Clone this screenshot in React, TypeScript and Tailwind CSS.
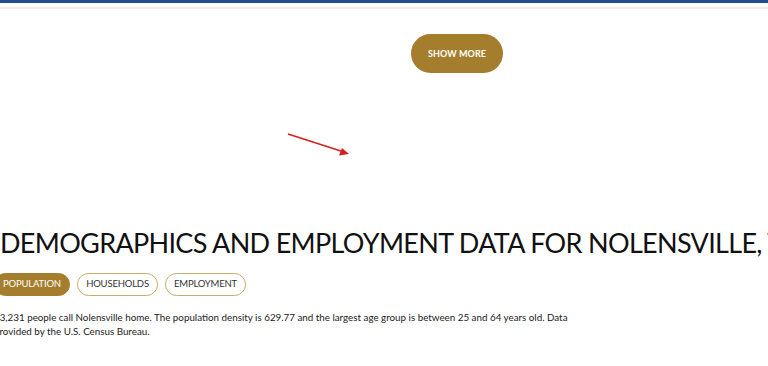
const tabs = ["POPULATION", "HOUSEHOLDS", "EMPLOYMENT"];

function Arrow() {
  return (
    <svg
      className="absolute left-[286px] top-[131px]"
      width="66"
      height="28"
      viewBox="0 0 66 28"
    >
      <line x1="2" y1="3" x2="58" y2="21" stroke="#d61f1f" strokeWidth="1.6" />
      <polygon points="63,23 53,24.5 56,17" fill="#d61f1f" />
    </svg>
  );
}

export default function App() {
  const active = "POPULATION";
  return (
    <div className="relative w-[768px] h-[366px] overflow-hidden bg-white font-['Lato',sans-serif]">
      <div className="h-[3px] bg-[#1f4f8f]" />
      <div className="mt-[4px] h-[2px] bg-[#ececec]" />

      <div className="pl-[411px] pt-[25px]">
        <button className="w-[92px] h-[39px] rounded-full bg-[#a47e2c] text-white text-[9px] font-bold tracking-[0.01em]">
          SHOW MORE
        </button>
      </div>

      <Arrow />

      <div className="-ml-[6px] pt-[155px]">
        <h2 className="pl-[6px] whitespace-nowrap text-[27px] leading-[30px] text-[#111] tracking-[-0.025em]">
          DEMOGRAPHICS AND EMPLOYMENT DATA FOR NOLENSVILLE, TN
        </h2>

        <div className="mt-[15px] flex gap-[7px]">
          {tabs.map((t) => (
            <button
              key={t}
              className={
                t === active
                  ? "h-[23px] w-[76px] rounded-full bg-[#a47e2c] border border-[#a47e2c] text-white text-[9.5px] tracking-[-0.02em]"
                  : "h-[23px] w-[81px] rounded-full bg-white border border-[#c9ab6a] text-[#333] text-[9.5px] tracking-[-0.02em]"
              }
            >
              {t}
            </button>
          ))}
        </div>

        <p className="mt-[14px] w-[600px] text-[9.8px] leading-[14px] text-[#222]">
          13,231 people call Nolensville home. The population density is 629.77
          and the largest age group is between 25 and 64 years old. Data
          provided by the U.S. Census Bureau.
        </p>
      </div>
    </div>
  );
}
